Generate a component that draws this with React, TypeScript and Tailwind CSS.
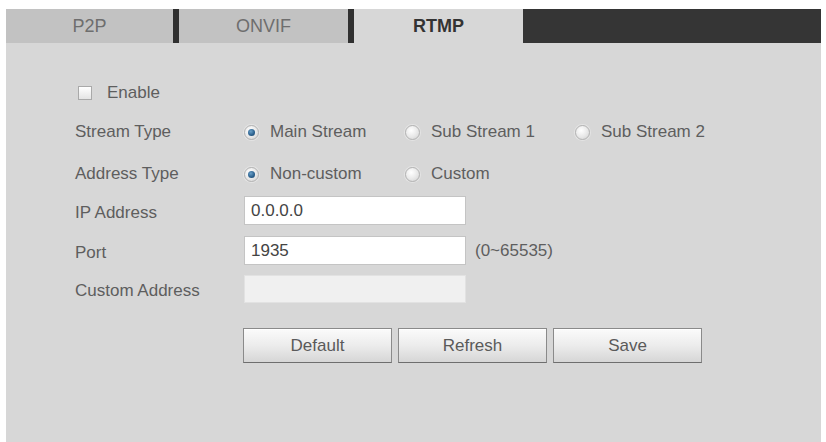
import React from "react";

function Radio({ checked }: { checked?: boolean }) {
  return (
    <span className="relative inline-flex h-[15px] w-[15px] shrink-0 items-center justify-center rounded-full border border-[#b4b4b4] bg-[radial-gradient(circle_at_40%_35%,#ffffff_0%,#e8e8e8_55%,#cfcfcf_100%)] shadow-[0_0_0_1px_#e4e4e4]">
      {checked && (
        <span className="h-[7px] w-[7px] rounded-full bg-[radial-gradient(circle_at_40%_35%,#6aa0c8_0%,#2a5f8c_60%,#1d4466_100%)]" />
      )}
    </span>
  );
}

function RadioItem({ label, checked, w }: { label: string; checked?: boolean; w: string }) {
  return (
    <div className={`flex items-center gap-[11px] ${w}`}>
      <Radio checked={checked} />
      <span>{label}</span>
    </div>
  );
}

function Btn({ label }: { label: string }) {
  return (
    <button className="h-[35px] w-[149px] border border-[#8a8a8a] border-b-[#6e6e6e] bg-[linear-gradient(#fbfbfb,#ececec_50%,#d6d6d6)] text-[17px] text-[#5a5a5a] shadow-[inset_0_1px_0_#fff]">
      {label}
    </button>
  );
}

export default function App() {
  return (
    <div className="h-[442px] w-[826px] overflow-hidden bg-white pt-[9px] pl-[6px] pr-[5px] font-['Liberation_Sans',Arial,sans-serif] text-[17px] text-[#5e5e5e]">
      <div className="flex h-[433px] flex-col bg-[#d7d7d7]">
        {/* Tabs */}
        <div className="flex h-[34px] shrink-0">
          <div className="flex w-[167px] items-center justify-center bg-[#c2c2c2] text-[18px] text-[#6e6e6e]">P2P</div>
          <div className="w-[6px] bg-[#303030]" />
          <div className="flex w-[169px] items-center justify-center bg-[#c2c2c2] text-[18px] text-[#6e6e6e]">ONVIF</div>
          <div className="w-[6px] bg-[#303030]" />
          <div className="flex w-[169px] items-center justify-center bg-[#d7d7d7] text-[18px] font-bold text-[#333]">RTMP</div>
          <div className="flex-1 bg-[#353535]" />
        </div>

        <div className="flex flex-col pl-[69px]">
          {/* Enable */}
          <div className="mt-[35px] flex h-[30px] items-center pl-[3px]">
            <span className="h-[14px] w-[14px] border border-[#a9a9a9] bg-[linear-gradient(#ffffff,#e4e4e4)]" />
            <span className="ml-[15px]">Enable</span>
          </div>

          {/* Stream Type */}
          <div className="mt-[9px] flex h-[30px] items-center">
            <div className="w-[169px]">Stream Type</div>
            <RadioItem label="Main Stream" checked w="w-[161px]" />
            <RadioItem label="Sub Stream 1" w="w-[170px]" />
            <RadioItem label="Sub Stream 2" w="w-auto" />
          </div>

          {/* Address Type */}
          <div className="mt-[12px] flex h-[30px] items-center">
            <div className="w-[169px]">Address Type</div>
            <RadioItem label="Non-custom" checked w="w-[161px]" />
            <RadioItem label="Custom" w="w-auto" />
          </div>

          {/* IP Address */}
          <div className="mt-[7px] flex h-[29px] items-center">
            <div className="w-[169px] pt-[4px]">IP Address</div>
            <div className="flex h-[29px] w-[222px] items-center border border-[#c4c4c4] bg-white px-[6px] text-[#444]">0.0.0.0</div>
          </div>

          {/* Port */}
          <div className="mt-[11px] flex h-[29px] items-center">
            <div className="w-[169px] pt-[4px]">Port</div>
            <div className="flex h-[29px] w-[222px] items-center border border-[#c4c4c4] bg-white px-[6px] text-[#444]">1935</div>
            <span className="ml-[9px]">(0~65535)</span>
          </div>

          {/* Custom Address */}
          <div className="mt-[10px] flex h-[28px] items-center">
            <div className="w-[169px] pt-[4px]">Custom Address</div>
            <div className="h-[28px] w-[222px] border border-[#e2e2e2] bg-[#f0f0f0]" />
          </div>

          {/* Buttons */}
          <div className="mt-[25px] flex gap-[6px] pl-[168px]">
            <Btn label="Default" />
            <Btn label="Refresh" />
            <Btn label="Save" />
          </div>
        </div>
      </div>
    </div>
  );
}
